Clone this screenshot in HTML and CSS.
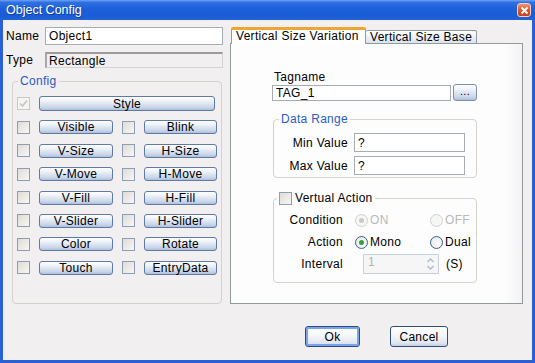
FILE: index.html
```html
<html>
  <head>
    <title>Object Config</title>
    <link rel="stylesheet" href="styles.css">
  </head>
  <body>
  <div class="window">
    <div class="titlebar">
      <span class="title">Object Config</span>
      <span class="close">
        <svg width="9" height="9" viewBox="0 0 9 9"><path d="M1.5 1.5 L7.5 7.5 M7.5 1.5 L1.5 7.5" stroke="#fff" stroke-width="1.8"/></svg>
      </span>
    </div>
    <div class="client">
      <div class="left">
        <div class="field name">
          <span class="fieldLabel">Name</span>
          <span class="edit">Object1</span>
        </div>
        <div class="field type">
          <span class="fieldLabel">Type</span>
          <span class="edit readonly">Rectangle</span>
        </div>
        <fieldset class="group config">
          <legend>Config</legend>
          <div class="opts">
            <span class="cb checked disabled">
              <svg width="9" height="9" viewBox="0 0 9 9"><path d="M1 4.5 L3.5 7 L8 1.5" fill="none" stroke="#c4c4c4" stroke-width="1.6"/></svg>
            </span>
            <span class="btn wide">Style</span>
            <span class="cb"></span><span class="btn">Visible</span>
            <span class="cb"></span><span class="btn">Blink</span>
            <span class="cb"></span><span class="btn">V-Size</span>
            <span class="cb"></span><span class="btn">H-Size</span>
            <span class="cb"></span><span class="btn">V-Move</span>
            <span class="cb"></span><span class="btn">H-Move</span>
            <span class="cb"></span><span class="btn">V-Fill</span>
            <span class="cb"></span><span class="btn">H-Fill</span>
            <span class="cb"></span><span class="btn">V-Slider</span>
            <span class="cb"></span><span class="btn">H-Slider</span>
            <span class="cb"></span><span class="btn">Color</span>
            <span class="cb"></span><span class="btn">Rotate</span>
            <span class="cb"></span><span class="btn">Touch</span>
            <span class="cb"></span><span class="btn">EntryData</span>
          </div>
        </fieldset>
      </div>

      <div class="right">
        <div class="tabs">
          <span class="tab active">Vertical Size Variation</span>
          <span class="tab">Vertical Size Base</span>
        </div>
        <div class="tabpage">
          <div class="tagLabel">Tagname</div>
          <div class="tagRow">
            <span class="edit tag">TAG_1</span>
            <span class="btn dots">...</span>
          </div>

          <fieldset class="group range">
            <legend>Data Range</legend>
            <div class="rangeRows">
              <span class="rowLabel">Min Value</span><span class="edit val">?</span>
              <span class="rowLabel">Max Value</span><span class="edit val">?</span>
            </div>
          </fieldset>

          <fieldset class="group action">
            <legend><span class="cb small"></span><span class="legendText">Vertual Action</span></legend>
            <div class="actionRows">
              <span class="rowLabel">Condition</span>
              <span class="radio disabled"><span class="rb on"></span>ON</span>
              <span class="radio disabled"><span class="rb"></span>OFF</span>

              <span class="rowLabel">Action</span>
              <span class="radio"><span class="rb on"></span>Mono</span>
              <span class="radio"><span class="rb"></span>Dual</span>

              <span class="rowLabel">Interval</span>
              <span class="interval">
                <span class="spin">
                  <span class="spinVal">1</span>
                  <span class="spinArrows">
                    <svg width="13" height="18" viewBox="0 0 13 18"><path d="M3.5 7 L6.5 4 L9.5 7" fill="none" stroke="#a9bcd6" stroke-width="1.4"/><path d="M3.5 11 L6.5 14 L9.5 11" fill="none" stroke="#a9bcd6" stroke-width="1.4"/></svg>
                  </span>
                </span>
                <span class="unit">(S)</span>
              </span>
            </div>
          </fieldset>
        </div>
      </div>

      <div class="actions">
        <span class="btn push default">Ok</span>
        <span class="btn push">Cancel</span>
      </div>
    </div>
  </div>
  </body>
</html>
```

FILE: styles.css
```css
*{
    box-sizing: border-box;
}
body{
    margin: 0;
    font-family: "Liberation Sans", Arial, sans-serif;
    font-size: 12px;
    letter-spacing: 0.3px;
    color: #000000;
}
.window{
    width: 535px;
    height: 363px;
    display: flex;
    flex-direction: column;
}
.titlebar{
    height: 20px;
    display: flex;
    align-items: center;
    justify-content: space-between;
    padding: 0 4px 0 6px;
    background: linear-gradient(to bottom, #6ea3f5 0%, #2f70e2 12%, #1d5fd9 45%, #1a5bd6 80%, #2463d6 100%);
    color: #FFFFFF;
}
.title{
    font-size: 12.5px;
    letter-spacing: 0;
    text-shadow: 1px 1px 0 #153f9c;
}
.close{
    width: 14px;
    height: 14px;
    border: 1px solid #f3d2c6;
    border-radius: 3px;
    background: linear-gradient(to bottom, #f19372, #d8532c 55%, #c4401d);
    display: flex;
    align-items: center;
    justify-content: center;
}
.client{
    flex: 1;
    background-color: #f1efef;
    border: 3px solid #2b5fd6;
    border-top: 0;
    display: grid;
    grid-template-columns: 215px 293px;
    grid-template-rows: 277px auto;
    column-gap: 7px;
    padding: 7px 9px 0 5px;
}

/* left side */
.left{
    display: flex;
    flex-direction: column;
}
.field{
    display: flex;
    align-items: center;
}
.field.name{
    height: 18px;
}
.field.type{
    height: 16px;
    margin-top: 7px;
}
.fieldLabel{
    width: 37px;
    overflow: hidden;
    white-space: nowrap;
    margin-left: -2px;
    margin-right: 2px;
}
.edit{
    background-color: #FFFFFF;
    border: 1px solid #a5acb5;
    height: 100%;
    flex: 1;
    display: flex;
    align-items: center;
    padding-left: 3px;
    white-space: nowrap;
}
.edit.readonly{
    background-color: #f1efef;
    border-color: #d6d3d3;
    border-top: 2px solid #9b9b9b;
    border-left: 2px solid #a8a8a8;
    padding-left: 2px;
}
.group{
    margin: 0;
    padding: 0;
    border: 1px solid #d5d2cc;
    border-radius: 4px;
}
.group legend{
    padding: 0 2px;
    margin-left: 5px;
    line-height: 14px;
    color: #2b5bc4;
}
.config{
    margin: 6px 1px 0 4px;
    flex: 1;
}
.opts{
    display: grid;
    grid-template-columns: 13px 74px 13px 73px;
    grid-template-rows: 15px;
    grid-auto-rows: 14px;
    column-gap: 9px;
    row-gap: 9.4px;
    align-items: center;
    padding: 8px 0 0 4px;
}
.cb{
    width: 13px;
    height: 13px;
    border: 1px solid #8e9db6;
    background: linear-gradient(135deg, #dedcd6, #f7f7f5);
    display: inline-flex;
    align-items: center;
    justify-content: center;
}
.cb.disabled{
    border-color: #cac8c0;
    background: #f5f4f2;
}
.btn{
    height: 14px;
    border: 1px solid #5f7aa3;
    border-radius: 3px;
    background: linear-gradient(to bottom, #ffffff 0%, #eef2f9 30%, #c9d5e8 80%, #aebfdc 100%);
    display: flex;
    align-items: center;
    justify-content: center;
    white-space: nowrap;
    line-height: 12px;
}
.btn.wide{
    grid-column: 2 / 5;
    height: 15px;
    margin-right: 2px;
}

/* right side */
.right{
    display: flex;
    flex-direction: column;
}
.tabs{
    height: 16px;
    display: flex;
    align-items: flex-end;
    padding-left: 1px;
}
.tab{
    width: 111px;
    height: 13px;
    padding-left: 4px;
    border: 1px solid #919b9c;
    border-bottom: 0;
    border-left: 0;
    border-radius: 2px 2px 0 0;
    background: linear-gradient(to bottom, #ffffff, #e6ecf5 70%, #d8e1ee);
    line-height: 13px;
    white-space: nowrap;
}
.tab.active{
    position: relative;
    z-index: 1;
    width: 135px;
    height: 17px;
    margin-bottom: -1px;
    border-left: 1px solid #919b9c;
    border-top: 3px solid #f0a531;
    background: #FFFFFF;
}
.tabpage{
    flex: 1;
    background: linear-gradient(to right, #fdfdfd 94%, #f3f3f5);
    border: 1px solid #919b9c;
    padding: 26px 45px 0 41px;
}
.tagLabel{
    line-height: 14px;
    padding-left: 2px;
}
.tagRow{
    display: flex;
    align-items: center;
    gap: 2px;
    height: 17px;
}
.edit.tag{
    height: 16px;
}
.btn.dots{
    width: 24px;
    height: 17px;
    border-color: #7990b5;
    font-size: 11px;
    line-height: 9px;
    align-items: flex-start;
    padding-top: 2px;
}
.range{
    margin-top: 11px;
    margin-left: 1px;
}
.rangeRows{
    display: grid;
    grid-template-columns: 74px 111px;
    grid-auto-rows: 19px;
    column-gap: 6px;
    row-gap: 4px;
    align-items: center;
    padding: 7px 0 2px 0;
}
.rowLabel{
    text-align: right;
}
.edit.val{
    height: 19px;
}
.action{
    margin-top: 13px;
    margin-left: 1px;
}
.action legend{
    margin-left: 3px;
    color: #000000;
    display: flex;
    align-items: center;
}
.legendText{
    padding-left: 3px;
}
.actionRows{
    display: grid;
    grid-template-columns: 69px 63px auto;
    grid-auto-rows: 20px;
    column-gap: 12px;
    row-gap: 2px;
    align-items: center;
    padding: 5px 0 8px 0;
}
.radio{
    display: flex;
    align-items: center;
    gap: 2px;
}
.radio.disabled{
    color: #b9b9b9;
}
.rb{
    width: 13px;
    height: 13px;
    border-radius: 50%;
    border: 1px solid #385f98;
    background: radial-gradient(circle at 60% 60%, #ffffff, #e2e2dc);
    display: inline-flex;
    align-items: center;
    justify-content: center;
}
.rb.on::after{
    content: "";
    width: 5px;
    height: 5px;
    border-radius: 50%;
    background: #2fa22f;
}
.radio.disabled .rb{
    border-color: #d0d0cc;
    background: #f6f6f4;
}
.radio.disabled .rb.on::after{
    background: #c9c9c9;
}
.interval{
    grid-column: 2 / 4;
    display: flex;
    align-items: center;
    gap: 7px;
    padding-left: 8px;
}
.spin{
    width: 76px;
    height: 20px;
    border: 1px solid #c6cfdc;
    background-color: #f6f6f6;
    display: flex;
    justify-content: space-between;
}
.spinVal{
    color: #b3b3b3;
    padding-left: 4px;
    line-height: 15px;
}
.spinArrows{
    width: 15px;
    display: flex;
    align-items: center;
    justify-content: center;
}

/* bottom buttons */
.actions{
    grid-column: 2;
    display: flex;
    justify-content: center;
    gap: 30px;
    padding-top: 22px;
}
.btn.push{
    height: 21px;
    width: 58px;
    border-color: #2e4f7f;
    background: linear-gradient(to bottom, #ffffff 0%, #f4f6fa 45%, #dfe5ef 85%, #c4cfe0 100%);
}
.btn.push.default{
    width: 55px;
    border: 1px solid #2b4a86;
    box-shadow: inset 0 0 0 2px #7ba3e8;
}
```
